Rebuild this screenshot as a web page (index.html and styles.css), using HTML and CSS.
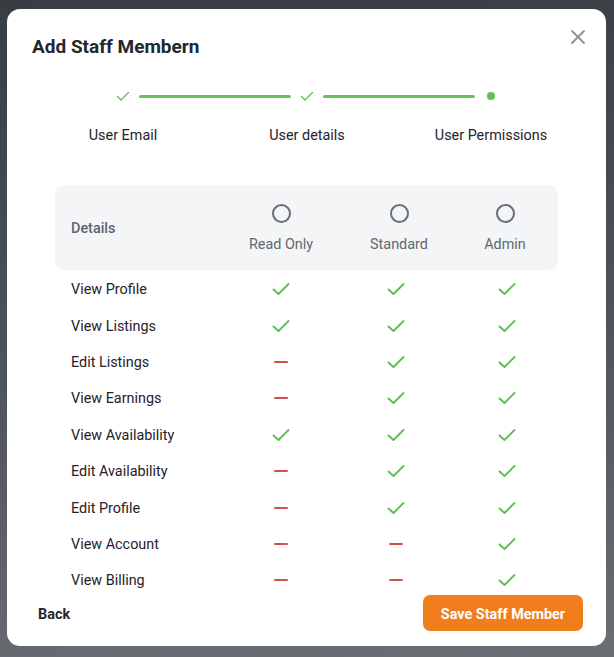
FILE: index.html
```html
<!DOCTYPE html>
<html lang="en">
<head>
<meta charset="utf-8">
<title>Add Staff Member</title>
<link rel="stylesheet" href="styles.css">
</head>
<body>
<div class="modal">
  <header class="modal-head">
    <h1 class="title">Add Staff Membern</h1>
    <button class="close" aria-label="Close">
      <svg width="16" height="16" viewBox="0 0 16 16"><path d="M2 2L14 14M14 2L2 14" stroke="#8b9099" stroke-width="1.8" stroke-linecap="round" fill="none"/></svg>
    </button>
  </header>

  <div class="stepper">
    <div class="step-track">
      <span class="marker"><svg width="16" height="16" viewBox="0 0 16 16"><path d="M2.5 8.5L6 12L13.5 4.5" stroke="#62c157" stroke-width="1.4" fill="none" stroke-linecap="round" stroke-linejoin="round"/></svg></span>
      <span class="track-line"></span>
      <span class="marker"><svg width="16" height="16" viewBox="0 0 16 16"><path d="M2.5 8.5L6 12L13.5 4.5" stroke="#62c157" stroke-width="1.4" fill="none" stroke-linecap="round" stroke-linejoin="round"/></svg></span>
      <span class="track-line"></span>
      <span class="marker"><span class="dot"></span></span>
    </div>
    <div class="step-labels">
      <span>User Email</span>
      <span>User details</span>
      <span>User Permissions</span>
    </div>
  </div>

  <div class="modal-body">
    <div class="perm-head">
      <span class="head-label">Details</span>
      <span class="role"><span class="radio"></span><span>Read Only</span></span>
      <span class="role"><span class="radio"></span><span>Standard</span></span>
      <span class="role"><span class="radio"></span><span>Admin</span></span>
    </div>
    <div class="perm-rows" id="rows"></div>
  </div>

  <footer class="modal-foot">
    <button class="back">Back</button>
    <button class="save">Save Staff Member</button>
  </footer>
</div>
<script>
  const yes = '<svg class="ico" width="18" height="14" viewBox="0 0 18 14"><path d="M1.5 7.5L6.5 12L16.5 2" stroke="#5cbd52" stroke-width="1.9" fill="none" stroke-linecap="round" stroke-linejoin="round"/></svg>';
  const no = '<span class="dash"></span>';
  const data = [
    ['View Profile', 1, 1, 1],
    ['View Listings', 1, 1, 1],
    ['Edit Listings', 0, 1, 1],
    ['View Earnings', 0, 1, 1],
    ['View Availability', 1, 1, 1],
    ['Edit Availability', 0, 1, 1],
    ['Edit Profile', 0, 1, 1],
    ['View Account', 0, 0, 1],
    ['View Billing', 0, 0, 1]
  ];
  document.getElementById('rows').innerHTML = data.map(r =>
    '<div class="perm-row"><span class="row-label">' + r[0] + '</span>' +
    r.slice(1).map(v => '<span class="cell">' + (v ? yes : no) + '</span>').join('') +
    '</div>').join('');
</script>
</body>
</html>
```

FILE: styles.css
```css
* { box-sizing: border-box; }

html, body { height: 100%; }

body {
  margin: 0;
  background: linear-gradient(175deg, #383c43 0%, #50545b 55%, #6b6e73 100%);
  font-family: "Roboto", "Liberation Sans", sans-serif;
  color: #23272e;
  overflow: hidden;
}

.modal {
  margin: 9px 0 0 7px;
  width: 599px;
  height: 637px;
  background: #ffffff;
  border-radius: 13px;
  display: flex;
  flex-direction: column;
  overflow: hidden;
}

.modal-head {
  display: flex;
  justify-content: space-between;
  align-items: flex-start;
  padding: 20px 20px 0 25px;
}

.title {
  margin: 6px 0 0;
  font-size: 19px;
  line-height: 24px;
  font-weight: 700;
  color: #23272e;
}

.close {
  border: 0;
  background: none;
  padding: 0;
  width: 16px;
  height: 16px;
  display: flex;
  cursor: pointer;
}

.stepper {
  margin-top: 29px;
  display: flex;
  flex-direction: column;
  align-items: center;
}

.step-track {
  display: flex;
  align-items: center;
  gap: 8px;
  height: 16px;
  margin-left: 1px;
}

.marker {
  width: 16px;
  height: 16px;
  display: flex;
  align-items: center;
  justify-content: center;
}

.dot {
  width: 8px;
  height: 8px;
  border-radius: 50%;
  background: #5cbf50;
}

.track-line {
  width: 152px;
  height: 3px;
  border-radius: 2px;
  background: #6cc35e;
}

.step-labels {
  margin-top: 22px;
  display: grid;
  grid-template-columns: repeat(3, 184px);
  margin-left: 1px;
  font-size: 14.4px;
  line-height: 20px;
  color: #1f232a;
}

.step-labels span { text-align: center; }

.modal-body {
  flex: 1;
  overflow: hidden;
  margin: 39px 48px 0;
}

.perm-head,
.perm-row {
  display: grid;
  grid-template-columns: 167px 118px 112px 106px;
  align-items: center;
}

.perm-head {
  height: 85px;
  background: #f3f5f7;
  border-radius: 9px;
}

.head-label {
  padding-left: 16px;
  padding-top: 2px;
  font-size: 14.4px;
  font-weight: 500;
  color: #5c6470;
}

.role {
  display: flex;
  flex-direction: column;
  align-items: center;
  gap: 12px;
  padding-top: 4px;
  font-size: 14.4px;
  line-height: 20px;
  color: #626870;
}

.role:nth-child(3) { padding-left: 6px; }

.radio {
  width: 19px;
  height: 19px;
  border: 2px solid #6a6e75;
  border-radius: 50%;
}

.perm-row {
  height: 36.4px;
  font-size: 14.4px;
  line-height: 20px;
}

.perm-row:first-child { margin-top: 1px; }

.row-label {
  padding-left: 16px;
  padding-top: 2px;
  color: #1f232a;
}

.cell {
  display: flex;
  justify-content: center;
  align-items: center;
}

.perm-row .cell:last-child { padding-left: 4px; }

.dash {
  width: 14px;
  height: 2px;
  border-radius: 1px;
  background: #cf5249;
}

.modal-foot {
  display: flex;
  justify-content: space-between;
  align-items: center;
  padding: 0 23px 15px 31px;
}

.back {
  border: 0;
  background: none;
  padding: 3px 0 0;
  font: 700 14.4px/20px "Roboto", "Liberation Sans", sans-serif;
  color: #23272e;
}

.save {
  width: 160px;
  height: 36px;
  border: 0;
  border-radius: 7px;
  padding: 3px 0 0;
  background: #f27d1c;
  color: #ffffff;
  font: 700 14.4px/20px "Roboto", "Liberation Sans", sans-serif;
}
```
